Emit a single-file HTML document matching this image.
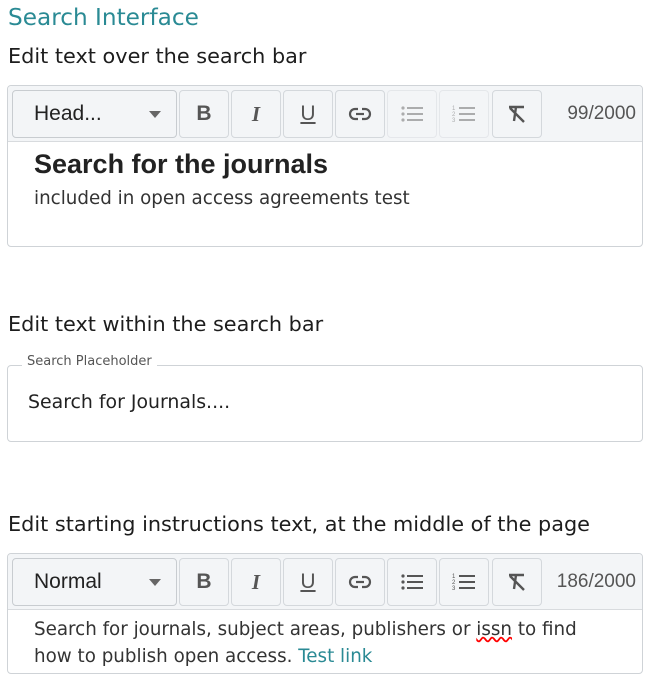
<!DOCTYPE html><html><head><style>
body{margin:0;background:#fff;font-family:"DejaVu Sans",sans-serif;color:#222;width:655px;height:686px;position:relative;overflow:hidden}
.a{position:absolute}
.h{left:8px;top:4px;font-size:23.2px;color:#2a8a94}
.lbl{left:8px;font-size:20.8px;color:#1d1d1d}
.ed{left:7px;width:634px;border:1px solid #cfd3d7;border-radius:4px;background:#fff}
.tb{position:absolute;left:0;top:0;width:634px;height:55px;background:#f3f5f7;border-bottom:1px solid #d8dbde;border-radius:4px 4px 0 0;font-family:"Liberation Sans",sans-serif}
.sel{position:absolute;left:4px;top:4px;width:165px;height:48px;border:1px solid #c8ccd0;border-radius:4px;background:#f3f5f7;font-size:21px;line-height:46px;padding-left:21px;box-sizing:border-box}
.sel:after{content:"";position:absolute;right:15px;top:20px;border:6px solid transparent;border-top:7px solid #666;border-bottom:0}
.b{position:absolute;top:4px;width:50px;height:48px;border:1px solid #d4d8dc;border-radius:4px;box-sizing:border-box;display:flex;align-items:center;justify-content:center;color:#555}
.cnt{position:absolute;right:6px;top:0;line-height:55px;font-size:19px;color:#555}
</style></head><body>
<div class="a h">Search Interface</div>
<div class="a lbl" style="top:44px">Edit text over the search bar</div>
<div class="a ed" style="top:85px;height:160px">
<div class="tb"><div class="sel">Head...</div>
<div class="b" style="left:171px;font-weight:bold;font-size:21px">B</div>
<div class="b" style="left:223px;font-style:italic;font-weight:bold;font-size:21px;font-family:'Liberation Serif'">I</div>
<div class="b" style="left:275px;font-size:21px;text-decoration:underline">U</div>
<div class="b" style="left:327px"><svg width="24" height="14"><rect x="2" y="2" width="20" height="10" rx="5" fill="none" stroke="#555" stroke-width="2.2"/><rect x="10" y="0" width="4" height="14" fill="#f3f5f7"/><line x1="8" y1="7" x2="16" y2="7" stroke="#555" stroke-width="2.2"/></svg></div>
<div class="b" style="left:379px;opacity:.45"><svg width="24" height="20"><g fill="#555"><circle cx="3" cy="4" r="1.6"/><circle cx="3" cy="10" r="1.6"/><circle cx="3" cy="16" r="1.6"/><rect x="7" y="3" width="16" height="2"/><rect x="7" y="9" width="16" height="2"/><rect x="7" y="15" width="16" height="2"/></g></svg></div>
<div class="b" style="left:431px;opacity:.45"><svg width="24" height="20"><g fill="#555" font-size="6"><text x="0" y="6">1</text><text x="0" y="12">2</text><text x="0" y="18">3</text><rect x="7" y="3" width="16" height="2"/><rect x="7" y="9" width="16" height="2"/><rect x="7" y="15" width="16" height="2"/></g></svg></div>
<div class="b" style="left:484px"><svg width="20" height="18"><path d="M2 2H17M9 2L7 16M3 3L17 17" stroke="#555" stroke-width="2.4" fill="none"/></svg></div>
<div class="cnt">99/2000</div></div>
<div class="a" style="left:26px;top:63px;font-size:27px;font-weight:bold;color:#222;font-family:'Liberation Sans',sans-serif">Search for the journals</div>
<div class="a" style="left:26px;top:102px;font-size:18.3px;color:#333">included in open access agreements test</div>
</div>
<div class="a lbl" style="top:312px">Edit text within the search bar</div>
<div class="a" style="left:7px;top:365px;width:634px;height:75px;border:1px solid #cfd3d7;border-radius:4px"></div>
<div class="a" style="left:22px;top:354px;background:#fff;padding:0 5px;font-size:13px;color:#555">Search Placeholder</div>
<div class="a" style="left:28px;top:391px;font-size:18.9px;color:#222">Search for Journals....</div>
<div class="a lbl" style="top:512px">Edit starting instructions text, at the middle of the page</div>
<div class="a ed" style="top:553px;height:119px">
<div class="tb"><div class="sel">Normal</div>
<div class="b" style="left:171px;font-weight:bold;font-size:21px">B</div>
<div class="b" style="left:223px;font-style:italic;font-weight:bold;font-size:21px;font-family:'Liberation Serif'">I</div>
<div class="b" style="left:275px;font-size:21px;text-decoration:underline">U</div>
<div class="b" style="left:327px"><svg width="24" height="14"><rect x="2" y="2" width="20" height="10" rx="5" fill="none" stroke="#555" stroke-width="2.2"/><rect x="10" y="0" width="4" height="14" fill="#f3f5f7"/><line x1="8" y1="7" x2="16" y2="7" stroke="#555" stroke-width="2.2"/></svg></div>
<div class="b" style="left:379px"><svg width="24" height="20"><g fill="#555"><circle cx="3" cy="4" r="1.6"/><circle cx="3" cy="10" r="1.6"/><circle cx="3" cy="16" r="1.6"/><rect x="7" y="3" width="16" height="2"/><rect x="7" y="9" width="16" height="2"/><rect x="7" y="15" width="16" height="2"/></g></svg></div>
<div class="b" style="left:431px"><svg width="24" height="20"><g fill="#555" font-size="6"><text x="0" y="6">1</text><text x="0" y="12">2</text><text x="0" y="18">3</text><rect x="7" y="3" width="16" height="2"/><rect x="7" y="9" width="16" height="2"/><rect x="7" y="15" width="16" height="2"/></g></svg></div>
<div class="b" style="left:484px"><svg width="20" height="18"><path d="M2 2H17M9 2L7 16M3 3L17 17" stroke="#555" stroke-width="2.4" fill="none"/></svg></div>
<div class="cnt">186/2000</div></div>
<div class="a" style="left:26px;top:62px;font-size:18.3px;color:#333;line-height:27px;width:610px;white-space:nowrap">Search for journals, subject areas, publishers or <span style="text-decoration:underline wavy red">issn</span> to find<br>how to publish open access. <span style="color:#2a8a94">Test link</span></div>
</div>
</body></html>
